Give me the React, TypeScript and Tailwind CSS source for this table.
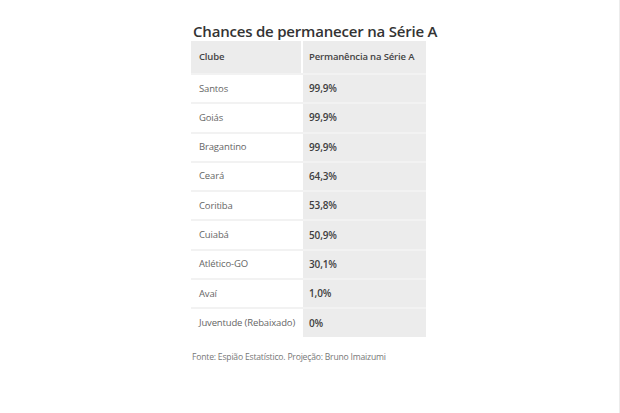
import React from "react";

const rows: [string, string][] = [
  ["Santos", "99,9%"],
  ["Goiás", "99,9%"],
  ["Bragantino", "99,9%"],
  ["Ceará", "64,3%"],
  ["Coritiba", "53,8%"],
  ["Cuiabá", "50,9%"],
  ["Atlético-GO", "30,1%"],
  ["Avaí", "1,0%"],
  ["Juventude (Rebaixado)", "0%"],
];

export default function App() {
  return (
    <div className="h-[413px] w-[620px] bg-white border-r border-[#ececec] font-['Open_Sans',sans-serif]">
      <div className="pl-[191px] pt-[22px]">
        <h2 className="pl-[2px] text-[15px] font-semibold leading-[19px] tracking-[-0.2px] text-[#333]">
          Chances de permanecer na Série A
        </h2>
        {/* table */}
        <div className="w-[235px] whitespace-nowrap text-[9.5px] tracking-[-0.15px]">
          <div className="flex h-[32px] bg-[#ececec] font-semibold text-[#444]">
            <div className="flex w-[110px] items-center pl-[8px]">Clube</div>
            <div className="flex flex-1 items-center border-l-2 border-white pl-[6px]">Permanência na Série A</div>
          </div>
          {rows.map(([club, pct]) => (
            <div key={club} className="flex h-[29.3px] border-t-2 border-[#f2f2f2]">
              <div className="flex w-[110px] items-center bg-white pl-[8px] text-[#666]">{club}</div>
              <div className="flex flex-1 items-center border-l-2 border-white bg-[#ececec] pl-[6px] text-[10px] font-semibold text-[#3f3f3f]">
                {pct}
              </div>
            </div>
          ))}
        </div>
        <p className="mt-[14px] pl-[1px] text-[8.6px] tracking-[-0.2px] text-[#777]">
          Fonte: Espião Estatístico. Projeção: Bruno Imaizumi
        </p>
      </div>
    </div>
  );
}
